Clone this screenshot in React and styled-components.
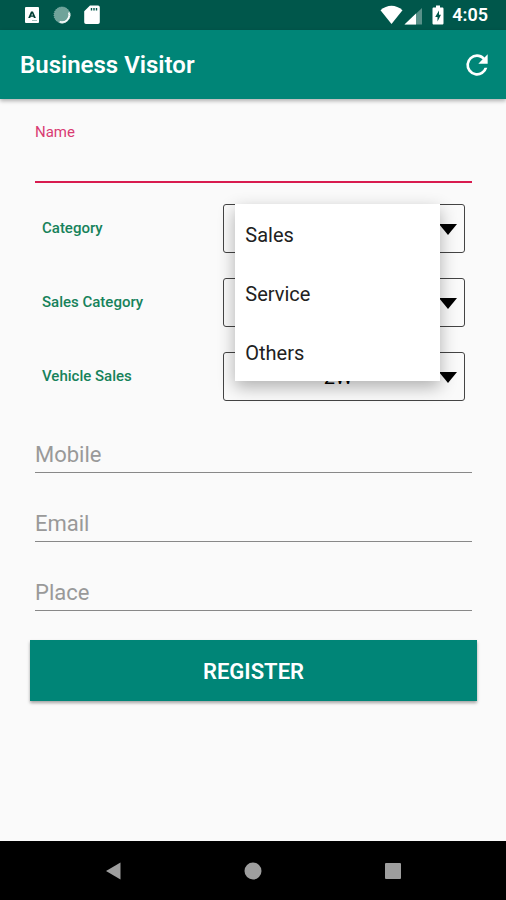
import React, { useState } from 'react';
import styled, { createGlobalStyle } from 'styled-components';

const categories = ['Sales', 'Service', 'Others'];

const App = () => {
  const [category, setCategory] = useState('Sales');
  const [menuOpen, setMenuOpen] = useState(true);

  const handlePick = (value) => {
    setCategory(value);
    setMenuOpen(false);
  };

  return (
    <Screen>
      <GlobalStyle />
      <StatusBar>
        <StatusGroup>
          <svg width="15" height="16" viewBox="0 0 15 16" aria-hidden="true">
            <rect width="14" height="16" rx="1" fill="#fff" />
            <path d="M3.2 11 6 4.5h2L10.9 11h-2l-.5-1.2H5.7L5.2 11zM6.3 8.4h1.6l-.8-2.1z" fill="#003d33" fillRule="evenodd" />
            <path d="M7 13.5h5" stroke="#9dc0ba" />
          </svg>
          <svg width="18" height="18" viewBox="0 0 18 18" aria-hidden="true">
            <circle cx="9" cy="9" r="8" fill="#6fa39a" />
            <path d="M16 6.5a7.4 7.4 0 0 1-9.4 9.4" fill="none" stroke="#fff" strokeWidth="2" />
            <circle cx="9" cy="9" r="8" fill="none" stroke="#9cc1bb" strokeWidth=".8" strokeDasharray="1 1" />
          </svg>
          <svg width="16" height="20" viewBox="0 0 16 20" aria-hidden="true">
            <path d="M6 .5h8a1.8 1.8 0 0 1 1.8 1.8v15a1.8 1.8 0 0 1-1.8 1.8H2a1.8 1.8 0 0 1-1.8-1.8V6.2z" fill="#fff" />
            <path d="M7.5 3v2.5M10 3v2.5M12.5 3v2.5" stroke="#00574b" strokeWidth="1.4" />
          </svg>
        </StatusGroup>
        <StatusGroup $right>
          <svg width="48" height="20" viewBox="0 0 48 20" aria-hidden="true">
            <path d="M.5 5.3C7-.7 16-.7 22.5 5.3L11.5 19z" fill="#fff" />
            <path d="M42 3v16.5H24.5z" fill="#fff" fillOpacity=".35" />
            <path d="M36 8.6v10.9H24.5z" fill="#fff" />
          </svg>
          <svg width="12" height="20" viewBox="0 0 12 20" aria-hidden="true">
            <path d="M4 .5h4v2h2.2c.8 0 1.3.5 1.3 1.3v14.4c0 .8-.5 1.3-1.3 1.3H1.8c-.8 0-1.3-.5-1.3-1.3V3.8c0-.8.5-1.3 1.3-1.3H4z" fill="#fff" />
            <path d="M7 5.5 3.2 12h2.300v4.500L9 9.800H7z" fill="#00574b" />
          </svg>
          <Clock>4:05</Clock>
        </StatusGroup>
      </StatusBar>

      <AppBar>
        <Title>Business Visitor</Title>
        <RefreshButton type="button" aria-label="Refresh">
          <svg width="32" height="32" viewBox="0 0 24 24" aria-hidden="true">
            <path
              d="M17.65 6.35A7.96 7.96 0 0 0 12 4a8 8 0 1 0 7.73 10h-2.08A6 6 0 1 1 12 6c1.66 0 3.14.69 4.22 1.78L13 11h7V4z"
              fill="#fff"
            />
          </svg>
        </RefreshButton>
      </AppBar>

      <Form onSubmit={(e) => e.preventDefault()}>
        <NameField>
          <NameLabel htmlFor="name">Name</NameLabel>
          <NameInput id="name" type="text" />
        </NameField>

        <PickerList>
          <PickerRow>
            <PickerLabel htmlFor="category">Category</PickerLabel>
            <Picker>
              <Select id="category" value={category} onChange={(e) => setCategory(e.target.value)}>
                {categories.map((item) => (
                  <option key={item}>{item}</option>
                ))}
              </Select>
              <Arrow />
              {menuOpen && (
                <Menu>
                  {categories.map((item) => (
                    <li key={item}>
                      <MenuItem type="button" onClick={() => handlePick(item)}>{item}</MenuItem>
                    </li>
                  ))}
                </Menu>
              )}
            </Picker>
          </PickerRow>
          <PickerRow>
            <PickerLabel htmlFor="salesCategory">Sales Category</PickerLabel>
            <Picker>
              <Select id="salesCategory">
                <option>New</option>
              </Select>
              <Arrow />
            </Picker>
          </PickerRow>
          <PickerRow>
            <PickerLabel htmlFor="vehicleSales">Vehicle Sales</PickerLabel>
            <Picker>
              <Select id="vehicleSales">
                <option>2W</option>
              </Select>
              <Arrow />
            </Picker>
          </PickerRow>
        </PickerList>

        <FieldList>
          <TextInput type="tel" placeholder="Mobile" aria-label="Mobile" />
          <TextInput type="email" placeholder="Email" aria-label="Email" />
          <TextInput type="text" placeholder="Place" aria-label="Place" />
        </FieldList>

        <RegisterButton type="submit">REGISTER</RegisterButton>
      </Form>

      <NavBar>
        <NavButton type="button" aria-label="Back">
          <svg width="18" height="18" viewBox="0 0 18 18" aria-hidden="true">
            <path d="M2 9 16.5.5v17z" fill="#9e9e9e" />
          </svg>
        </NavButton>
        <NavButton type="button" aria-label="Home">
          <svg width="18" height="18" viewBox="0 0 18 18" aria-hidden="true">
            <circle cx="9" cy="9" r="8.5" fill="#9e9e9e" />
          </svg>
        </NavButton>
        <NavButton type="button" aria-label="Recent apps">
          <svg width="18" height="18" viewBox="0 0 18 18" aria-hidden="true">
            <rect x="1" y="1" width="16" height="16" rx="1" fill="#9e9e9e" />
          </svg>
        </NavButton>
      </NavBar>
    </Screen>
  );
};

const GlobalStyle = createGlobalStyle`
  * {
    box-sizing: border-box;
  }

  body {
    margin: 0;
    background: #fafafa;
    font-family: Roboto, sans-serif;
  }

  button, input, select {
    font-family: inherit;
    margin: 0;
  }
`;

const Screen = styled.div`
  display: flex;
  flex-direction: column;
  min-height: 100vh;
`;

const StatusBar = styled.div`
  display: flex;
  justify-content: space-between;
  align-items: center;
  height: 30px;
  padding: 0 18px 0 25px;
  background: #00574b;
`;

const StatusGroup = styled.div`
  display: flex;
  align-items: center;
  gap: ${(props) => (props.$right ? '4px' : '13px')};
`;

const Clock = styled.span`
  padding-left: 4px;
  color: #fff;
  font-size: 18px;
  font-weight: 600;
  line-height: 20px;
`;

const AppBar = styled.header`
  display: flex;
  justify-content: space-between;
  align-items: center;
  height: 69px;
  padding: 0 13px 0 20px;
  background: #008577;
  box-shadow: 0 2px 4px rgba(0, 0, 0, 0.3);
`;

const Title = styled.h1`
  margin: 0;
  color: #fff;
  font-size: 24px;
  font-weight: 600;
  line-height: 32px;
`;

const RefreshButton = styled.button`
  display: flex;
  padding: 0;
  border: 0;
  background: none;
`;

const Form = styled.form`
  display: flex;
  flex-direction: column;
  flex: 1;
  padding: 23px 29px 24px 30px;
`;

const NameField = styled.div`
  display: flex;
  flex-direction: column;
  padding: 0 5px;
`;

const NameLabel = styled.label`
  color: #d93b73;
  font-size: 15px;
  line-height: 20px;
`;

const NameInput = styled.input`
  height: 41px;
  padding: 0;
  border: 0;
  border-bottom: 2px solid #d81b4f;
  background: none;
  font-size: 22px;
  outline: none;
`;

const PickerList = styled.div`
  display: flex;
  flex-direction: column;
  gap: 25px;
  padding: 21px 12px 33px;
`;

const PickerRow = styled.div`
  display: grid;
  grid-template-columns: 3fr 4fr;
  align-items: center;
`;

const PickerLabel = styled.label`
  padding-bottom: 2px;
  color: #16825a;
  font-size: 15px;
  font-weight: 500;
  line-height: 20px;
`;

const Picker = styled.div`
  position: relative;
  display: flex;
`;

const Select = styled.select`
  appearance: none;
  width: 100%;
  height: 49px;
  padding: 0 12px 0 0;
  border: 1px solid #444;
  border-radius: 3px;
  background: none;
  color: #000;
  font-size: 20px;
  text-align: center;
  text-align-last: center;
`;

const Arrow = styled.span`
  position: absolute;
  top: 20px;
  right: 8px;
  border-top: 11px solid #000;
  border-left: 9px solid transparent;
  border-right: 9px solid transparent;
  pointer-events: none;
`;

const Menu = styled.ul`
  position: absolute;
  z-index: 1;
  top: 0;
  left: 12px;
  right: 25px;
  margin: 0;
  padding: 0;
  list-style: none;
  background: #fff;
  box-shadow: 0 6px 16px rgba(0, 0, 0, 0.3);
`;

const MenuItem = styled.button`
  display: block;
  width: 100%;
  height: 59px;
  padding: 2px 10px 0;
  border: 0;
  background: none;
  color: #212121;
  font-size: 20px;
  text-align: left;
`;

const FieldList = styled.div`
  display: flex;
  flex-direction: column;
  gap: 30px;
  padding: 0 5px 29px;
`;

const TextInput = styled.input`
  height: 39px;
  padding: 2px 0 0;
  border: 0;
  border-bottom: 1px solid #888;
  background: none;
  color: #212121;
  font-size: 22px;
  outline: none;

  &::placeholder {
    color: #999;
    opacity: 1;
  }
`;

const RegisterButton = styled.button`
  height: 61px;
  padding: 2px 0 0;
  border: 0;
  background: #008577;
  box-shadow: 0 2px 3px rgba(0, 0, 0, 0.35);
  color: #fff;
  font-size: 22px;
  font-weight: 600;
`;

const NavBar = styled.nav`
  display: flex;
  justify-content: center;
  align-items: center;
  gap: 122px;
  height: 59px;
  background: #000;
`;

const NavButton = styled.button`
  display: flex;
  padding: 0;
  border: 0;
  background: none;
`;

export default App;
